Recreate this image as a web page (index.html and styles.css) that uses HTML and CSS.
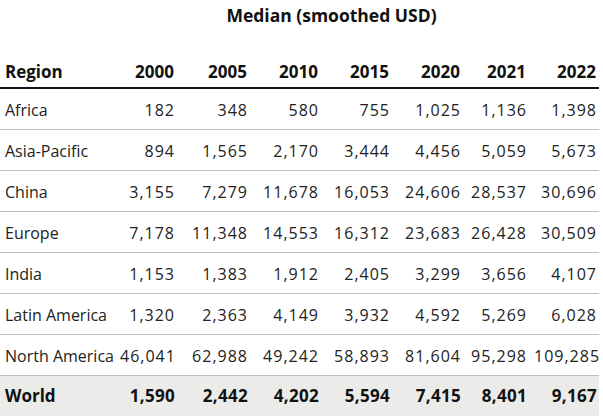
FILE: index.html
```html
<!DOCTYPE html>
<html lang="en">
<head>
<meta charset="utf-8">
<title>Median (smoothed USD)</title>
<link rel="stylesheet" href="styles.css">
</head>
<body>
<div class="wrap">
  <div class="title">Median (smoothed USD)</div>
  <table class="grid">
    <colgroup>
      <col class="c-region">
      <col class="c-2000">
      <col class="c-2005">
      <col class="c-2010">
      <col class="c-2015">
      <col class="c-2020">
      <col class="c-2021">
      <col class="c-2022">
    </colgroup>
    <thead>
      <tr>
        <th class="lbl">Region</th>
        <th>2000</th><th>2005</th><th>2010</th><th>2015</th><th>2020</th><th>2021</th><th>2022</th>
      </tr>
    </thead>
    <tbody>
      <tr><td class="lbl">Africa</td><td>182</td><td>348</td><td>580</td><td>755</td><td>1,025</td><td>1,136</td><td>1,398</td></tr>
      <tr><td class="lbl">Asia-Pacific</td><td>894</td><td>1,565</td><td>2,170</td><td>3,444</td><td>4,456</td><td>5,059</td><td>5,673</td></tr>
      <tr><td class="lbl">China</td><td>3,155</td><td>7,279</td><td>11,678</td><td>16,053</td><td>24,606</td><td>28,537</td><td>30,696</td></tr>
      <tr><td class="lbl">Europe</td><td>7,178</td><td>11,348</td><td>14,553</td><td>16,312</td><td>23,683</td><td>26,428</td><td>30,509</td></tr>
      <tr><td class="lbl">India</td><td>1,153</td><td>1,383</td><td>1,912</td><td>2,405</td><td>3,299</td><td>3,656</td><td>4,107</td></tr>
      <tr><td class="lbl">Latin America</td><td>1,320</td><td>2,363</td><td>4,149</td><td>3,932</td><td>4,592</td><td>5,269</td><td>6,028</td></tr>
      <tr><td class="lbl">North America</td><td>46,041</td><td>62,988</td><td>49,242</td><td>58,893</td><td>81,604</td><td>95,298</td><td>109,285</td></tr>
      <tr class="total"><td class="lbl">World</td><td>1,590</td><td>2,442</td><td>4,202</td><td>5,594</td><td>7,415</td><td>8,401</td><td>9,167</td></tr>
    </tbody>
  </table>
</div>
</body>
</html>
```

FILE: styles.css
```css
html, body {
  margin: 0;
  padding: 0;
  background: #ffffff;
}

body {
  font-family: "Open Sans", "Noto Sans", sans-serif;
  font-size: 16px;
  color: #222222;
}

.wrap {
  width: 599px;
}

.title {
  padding: 4px 0 0 64px;
  line-height: 22px;
  font-size: 17.5px;
  font-weight: 700;
  color: #111111;
  text-align: center;
}

.grid {
  width: 599px;
  table-layout: fixed;
  border-collapse: separate;
  border-spacing: 0;
}

.c-region { width: 115px; }
.c-2000 { width: 62px; }
.c-2005 { width: 73px; }
.c-2010 { width: 71px; }
.c-2015 { width: 71px; }
.c-2020 { width: 71px; }
.c-2021 { width: 66px; }
.c-2022 { width: 70px; }

.grid th,
.grid td {
  line-height: 22px;
  white-space: nowrap;
  text-align: right;
}

.grid th {
  padding: 35px 3px 4px 5px;
  font-size: 17px;
  font-weight: 700;
  color: #111111;
  border-bottom: 2px solid #111111;
}

.grid td {
  padding: 10px 2px 8px 5px;
  letter-spacing: 1px;
  border-bottom: 1px solid #bfbfbf;
}

.grid .lbl {
  text-align: left;
  letter-spacing: 0;
}

.grid .total td {
  padding: 9px 2px 9px 5px;
  background: #ebebea;
  font-size: 17px;
  font-weight: 700;
  letter-spacing: 0.3px;
  color: #111111;
  border-bottom: none;
}

.grid .total .lbl {
  letter-spacing: 0;
}
```
